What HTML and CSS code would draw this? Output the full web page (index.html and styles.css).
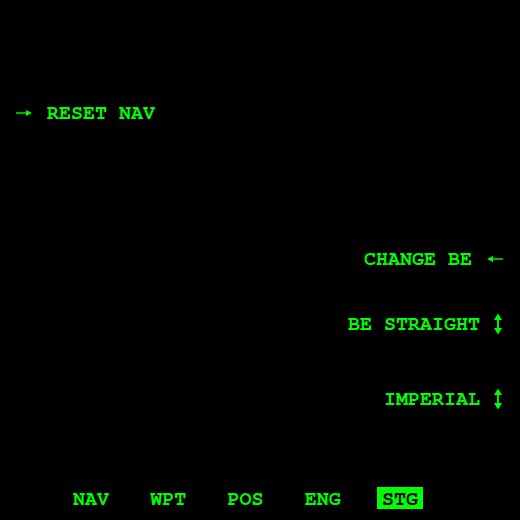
FILE: index.html
```html
<!DOCTYPE html>
<html>
<head>
<meta charset="utf-8">
<link rel="stylesheet" href="styles.css">
</head>
<body>
<div class="screen">
  <div class="row left reset">
    <svg class="arr-h" width="16" height="10" viewBox="0 0 16 10"><line x1="0" y1="5" x2="12" y2="5" stroke="#00ff00" stroke-width="1.4"/><path d="M10 2 L16 5 L10 8 Z" fill="#00ff00"/></svg>
    <span class="label">RESET NAV</span>
  </div>
  <div class="right-list">
    <div class="row right change">
      <span class="label">CHANGE BE</span>
      <svg class="arr-h" width="16" height="10" viewBox="0 0 16 10"><line x1="4" y1="5" x2="16" y2="5" stroke="#00ff00" stroke-width="1.4"/><path d="M6 2 L0 5 L6 8 Z" fill="#00ff00"/></svg>
    </div>
    <div class="row right straight">
      <span class="label">BE STRAIGHT</span>
      <svg class="arr-v" width="10" height="22" viewBox="0 0 10 22"><line x1="5" y1="3" x2="5" y2="19" stroke="#00ff00" stroke-width="1.8"/><path d="M1 7 L5 0.5 L9 7 Z M1 15 L5 21.5 L9 15 Z" fill="#00ff00"/></svg>
    </div>
    <div class="row right imperial">
      <span class="label">IMPERIAL</span>
      <svg class="arr-v" width="10" height="22" viewBox="0 0 10 22"><line x1="5" y1="3" x2="5" y2="19" stroke="#00ff00" stroke-width="1.8"/><path d="M1 7 L5 0.5 L9 7 Z M1 15 L5 21.5 L9 15 Z" fill="#00ff00"/></svg>
    </div>
  </div>
  <nav class="tabs">
    <span class="tab">NAV</span>
    <span class="tab">WPT</span>
    <span class="tab">POS</span>
    <span class="tab">ENG</span>
    <span class="tab active">STG</span>
  </nav>
</div>
</body>
</html>
```
FILE: styles.css
```css
html, body {
  margin: 0;
  padding: 0;
  background: #000;
}
.screen {
  width: 520px;
  height: 520px;
  box-sizing: border-box;
  padding-top: 101px;
  display: flex;
  flex-direction: column;
  font-family: "Nimbus Mono PS", "Nimbus Mono L", "FreeMono", "Courier 10 Pitch", Courier, monospace;
  font-weight: bold;
  font-size: 20px;
  color: #00ff00;
}
.row {
  display: flex;
  align-items: center;
  height: 24px;
  line-height: 24px;
}
.left {
  padding-left: 16px;
  gap: 15px;
}
.right-list {
  display: flex;
  flex-direction: column;
  margin-top: 122px;
}
.right {
  justify-content: flex-end;
  padding-right: 17px;
}
.change {
  gap: 15px;
}
.straight {
  margin-top: 41px;
  gap: 13px;
}
.imperial {
  margin-top: 51px;
  gap: 13px;
}
.arr-h {
  display: block;
  flex: none;
}
.arr-v {
  display: block;
  flex: none;
}
.tabs {
  display: flex;
  gap: 31.25px;
  margin-top: 76px;
  padding-left: 68px;
}
.tab {
  display: block;
  height: 22px;
  line-height: 20px;
  padding: 2px 5px 0 5px;
  box-sizing: border-box;
}
.tab.active {
  background: #00ff00;
  color: #000;
}
```
